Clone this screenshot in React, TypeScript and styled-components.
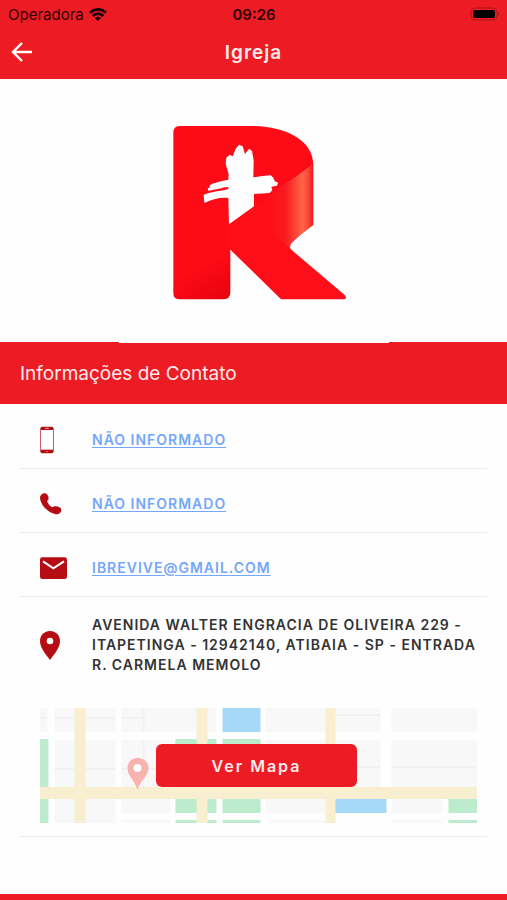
import React from "react";
import styled, { createGlobalStyle } from "styled-components";

const GlobalStyle = createGlobalStyle`
  * { box-sizing: border-box; }
  body {
    margin: 0;
    background: #fefefe;
    color: #333;
    font-family: Inter, "Liberation Sans", sans-serif;
  }
  svg { display: block; }
`;

const Screen = styled.div`
  display: flex;
  flex-direction: column;
  min-height: 100vh;
`;

const Header = styled.header`
  background: #ed1c24;
`;

const StatusBar = styled.div`
  display: grid;
  grid-template-columns: 1fr auto 1fr;
  align-items: center;
  height: 28px;
  padding: 0 7px 0 8px;
  font-size: 15px;
  color: #2b0305;
`;

const Carrier = styled.span`
  display: flex;
  align-items: center;
  gap: 5px;
`;

const Clock = styled.time`
  font-weight: 600;
`;

const Battery = styled.svg`
  justify-self: end;
`;

const NavBar = styled.div`
  display: grid;
  grid-template-columns: 44px 1fr 44px;
  align-items: center;
  height: 51px;
  padding-bottom: 3px;
`;

const BackButton = styled.button`
  padding: 10px;
  border: 0;
  background: none;
  color: #fff;
  cursor: pointer;
`;

const Title = styled.h1`
  margin: 0;
  text-align: center;
  font-size: 19px;
  font-weight: 600;
  letter-spacing: 1px;
  color: #ffeaea;
`;

const LogoArea = styled.div`
  display: flex;
  justify-content: center;
`;

const LogoFrame = styled.div`
  position: relative;
  margin-bottom: -1px;
  background: #fefefe;
`;

const SectionTitle = styled.h2`
  margin: 0;
  padding: 17px 20px 15px;
  background: #ed1c24;
  color: #ffeaea;
  font-size: 19px;
  font-weight: 400;
  line-height: 30px;
`;

const ContactList = styled.ul`
  flex: 1;
  margin: 0;
  padding: 1px 20px 32px;
  list-style: none;
`;

const ContactItem = styled.li`
  border-bottom: 1px solid #ebebeb;
`;

const ContactRow = styled.div<{ $tall?: boolean }>`
  display: grid;
  grid-template-columns: 52px 1fr;
  align-items: center;
  min-height: ${(p) => (p.$tall ? 96 : 63)}px;
  padding: ${(p) => (p.$tall ? "0" : "7px 0 0 0")};
  margin-left: 20px;
`;

const ContactLink = styled.a`
  justify-self: start;
  color: #75a7f8;
  font-size: 14px;
  font-weight: 600;
  line-height: 20px;
  letter-spacing: 1px;
  text-decoration: underline;
  text-underline-offset: 2px;
`;

const Address = styled.address`
  font-style: normal;
  font-size: 14px;
  font-weight: 600;
  line-height: 20px;
  letter-spacing: 1px;
`;

const MapPanel = styled.div`
  display: grid;
  margin: 15px 10px 13px 20px;
  > * { grid-area: 1 / 1; }
`;

const MapDrawing = styled.svg`
  width: 100%;
  height: 115px;
`;

const MapButton = styled.button`
  place-self: center;
  width: 46%;
  height: 43px;
  margin-right: 4px;
  border: 0;
  border-radius: 6px;
  background: #ed1c24;
  color: #ffeaea;
  font: 600 16px Inter, "Liberation Sans", sans-serif;
  letter-spacing: 2px;
  cursor: pointer;
`;

const Footer = styled.footer`
  height: 6px;
  background: #ed1c24;
`;

const RED = "#b50d14";

const Logo = () => (
  <svg width="270" height="264" viewBox="-124 -108 810 792" role="img" aria-label="Revive">
    <defs>
      <linearGradient id="stem" x1="0.4" y1="0.3" x2="0.7" y2="1">
        <stop offset="0.5" stopColor="#fe0b17" />
        <stop offset="1" stopColor="#dc0007" />
      </linearGradient>
      <linearGradient id="fold" x1="0" x2="1">
        <stop offset="0.1" stopColor="#fe0e19" />
        <stop offset="0.45" stopColor="#f81c20" />
        <stop offset="0.78" stopColor="#ff6548" />
        <stop offset="0.9" stopColor="#fa4638" />
        <stop offset="1" stopColor="#f3121a" />
      </linearGradient>
    </defs>
    <path fill="url(#stem)" d="M58 33H270C380 33 458 78 459 148L210 330V532Q210 553 189 553H58Q39 553 39 533V53Q39 33 58 33Z" />
    <path fill="#fe0e19" d="M204 330L350 222L430 350L396 382Q382 393 394 405L554 541Q562 553 547 553H362L204 398Z" />
    <path fill="url(#fold)" d="M310 256L459 147V330L396 379Q388 387 389 399L310 330Z" />
    <path fill="#fefefe" d="M206 328L204 249C180 246 157 252 132 264L130 239L145 234Q163 230 190 226L204 222V216C185 217 168 225 144 227L142 220L150 217L147 212L156 206L182 199L204 194L205 178L196 146L198 128L208 119L217 124L226 101L236 89L247 94L254 117L266 101L275 108L280 136L279 187L306 183L331 181L339 188L343 198L353 203L350 212L333 215L336 226L328 234L281 237V274Z" />
  </svg>
);

const Wifi = () => (
  <svg width="18" height="13" viewBox="0 0 54 39" fill="none" stroke="#190103" strokeWidth="8" aria-hidden="true">
    <path d="M3 14Q27-6 51 14" />
    <path d="M11 24Q27 10 43 24" />
    <path d="M18 30Q27 23 36 30L27 39Z" fill="#190103" stroke="none" />
  </svg>
);

const PhoneIcon = () => (
  <svg width="14" height="28" viewBox="0 0 42 84" aria-hidden="true">
    <rect x="1" y="2" width="40" height="80" rx="6" fill={RED} />
    <rect x="3" y="12" width="36" height="59" fill="#fefefe" />
    <path d="M16 7h10M19 77h4" stroke="#fff" strokeWidth="2" />
  </svg>
);

const CallIcon = () => (
  <svg width="22" height="22" viewBox="0 0 66 66" aria-hidden="true">
    <path
      fill={RED}
      d="M4 5Q8 0 15 1C21 2 26 9 26 16Q26 21 21 25Q25 36 36 43Q43 38 50 40C58 41 65 46 64 52Q63 61 52 64C30 64 2 39 0 14Q0 8 4 5Z"
    />
  </svg>
);

const MailIcon = () => (
  <svg width="28" height="22" viewBox="0 0 84 66" aria-hidden="true">
    <rect x="0" y="1" width="81" height="65" rx="7" fill={RED} />
    <path d="M9 13L40 34L72 13" fill="none" stroke="#fff" strokeWidth="6" />
  </svg>
);

const PinIcon = () => (
  <svg width="20" height="29" viewBox="0 0 60 87" aria-hidden="true">
    <path
      fill={RED}
      fillRule="evenodd"
      d="M30 0C13 0 0 13 0 30C0 49 13 65 30 87C47 65 60 49 60 30C60 13 47 0 30 0ZM30 20A10 10 0 1 1 30 40A10 10 0 1 1 30 20Z"
    />
  </svg>
);

const MapPicture = () => (
  <MapDrawing viewBox="0 0 438 115" preserveAspectRatio="xMidYMid slice" aria-hidden="true">
    <g fill="#f8f8f8">
      <path d="M0 0h8v24H0zM15 0h61v24H15zM82 0h95v24H82zM226 0h115v24H226zM352 0h86v24H352z" />
      <path d="M15 32h61v47H15zM82 32h72v47H82zM226 32h115v47H226zM352 32h86v47H352z" />
      <path d="M15 91h61v24H15zM82 91h49v14H82zM82 112h49v3H82zM226 91h60v14H226zM230 112h56v3H230zM352 91h51v14H352zM352 112h51v3H352z" />
    </g>
    <path d="M0 10h8M15 10h61M82 10h22M104 0v24M15 61h61M104 32v47M82 61h49M292 7h49M292 59h49M352 59h86" stroke="#f1f1f1" strokeWidth="2" />
    <path fill="#bcebcd" d="M0 31h9v84H0zM136 31h41v74h-41zM183 31h38v74h-38zM136 112h41v3h-41zM183 112h38v3h-38zM409 91h29v14h-29zM409 112h29v3h-29z" />
    <path fill="#a6d9f8" d="M183 0h38v24h-38zM295 91h52v14h-52z" />
    <path fill="#f8efd0" d="M0 79h438v12H0zM35 0h11v115H35zM157 0h11v115h-11zM286 0h10v115h-10z" />
    <path fill="#f9b3ae" d="M98 50c-6 0-10 4-10 10c0 8 7 12 10 22c3-10 11-14 11-22c0-6-5-10-11-10Z" />
    <circle cx="98" cy="60" r="4" fill="#fff" />
  </MapDrawing>
);

const contacts = [
  { id: "mobile", label: "NÃO INFORMADO", href: "#mobile", icon: <PhoneIcon /> },
  { id: "phone", label: "NÃO INFORMADO", href: "#phone", icon: <CallIcon /> },
  { id: "email", label: "IBREVIVE@GMAIL.COM", href: "mailto:ibrevive@gmail.com", icon: <MailIcon /> },
];

export default function App() {
  return (
    <Screen>
      <GlobalStyle />
      <Header>
        <StatusBar>
          <Carrier>
            Operadora
            <Wifi />
          </Carrier>
          <Clock>09:26</Clock>
          <Battery width="30" height="14" viewBox="0 0 30 14" aria-hidden="true">
            <rect x="1" y="1" width="26" height="12" rx="4" fill="none" stroke="#a8151b" />
            <rect x="3" y="3" width="22" height="8" rx="2" fill="#000" />
            <path d="M28 5q2 2 0 4z" fill="#a8151b" />
          </Battery>
        </StatusBar>
        <NavBar>
          <BackButton aria-label="Voltar">
            <svg width="24" height="22" viewBox="0 0 24 22" fill="none" stroke="currentColor" strokeWidth="2.4">
              <path d="M12 2L3 11L12 20M3 11H22" />
            </svg>
          </BackButton>
          <Title>Igreja</Title>
        </NavBar>
      </Header>
      <LogoArea>
        <LogoFrame>
          <Logo />
        </LogoFrame>
      </LogoArea>
      <SectionTitle>Informações de Contato</SectionTitle>
      <ContactList>
        {contacts.map((c) => (
          <ContactItem key={c.id}>
            <ContactRow>
              {c.icon}
              <ContactLink href={c.href}>{c.label}</ContactLink>
            </ContactRow>
          </ContactItem>
        ))}
        <ContactItem>
          <ContactRow $tall>
            <PinIcon />
            <Address>AVENIDA WALTER ENGRACIA DE OLIVEIRA 229 - ITAPETINGA - 12942140, ATIBAIA - SP - ENTRADA R. CARMELA MEMOLO</Address>
          </ContactRow>
          <MapPanel>
            <MapPicture />
            <MapButton>Ver Mapa</MapButton>
          </MapPanel>
        </ContactItem>
      </ContactList>
      <Footer />
    </Screen>
  );
}
